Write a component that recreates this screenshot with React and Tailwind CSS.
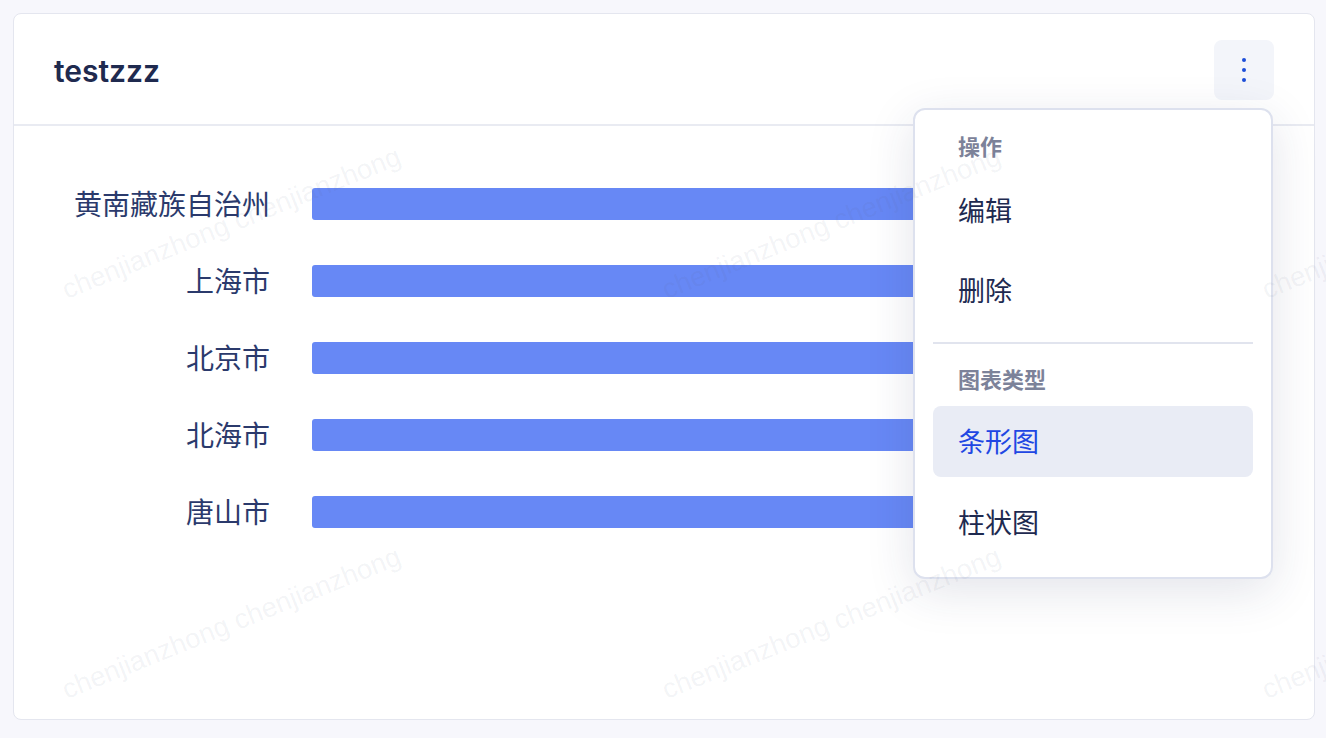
import { useState } from "react";

const regions = ["黄南藏族自治州", "上海市", "北京市", "北海市", "唐山市"];

const cjk = { fontFamily: '"Noto Sans CJK SC", "Noto Sans", sans-serif' };

function Watermark() {
    const tiles = Array.from({ length: 6 });
    return (
        <div className="pointer-events-none absolute inset-0 overflow-hidden">
            <div className="grid w-[1800px] grid-cols-3">
                {tiles.map((_, i) => (
                    <div key={i} className="relative h-[400px] w-[600px]">
                        <span
                            className="absolute left-[50px] top-[202px] -rotate-[22deg] whitespace-nowrap text-[27.5px] text-[rgba(90,100,130,0.08)]"
                            style={{ fontFamily: '"Liberation Sans", Arial, sans-serif' }}
                        >
                            chenjianzhong chenjianzhong
                        </span>
                    </div>
                ))}
            </div>
        </div>
    );
}

function MenuLabel({ children }) {
    return (
        <div className="flex h-[44px] items-center px-[25px] text-[22px] font-semibold text-[#7c8299]">
            {children}
        </div>
    );
}

function MenuItem({ children, active }) {
    return (
        <div
            className={
                active
                    ? "flex h-[71px] items-center rounded-lg bg-[#e9ecf5] px-[25px] text-[27px] text-[#2147e3]"
                    : "flex h-[71px] items-center rounded-lg px-[25px] text-[27px] text-[#1e2a50]"
            }
        >
            {children}
        </div>
    );
}

export default function App() {
    const [open] = useState(true);

    return (
        <div className="relative h-[738px] w-[1326px] bg-[#f7f7fc] p-[13px]" style={cjk}>
            <div className="relative flex h-[707px] w-[1302px] flex-col rounded-lg border border-[#e4e6ef] bg-white">
                <div className="flex h-[112px] items-center justify-between border-b-2 border-[#e9ebf2] px-10">
                    <h1
                        className="pt-[5px] text-[30px] font-semibold text-[#1f2a4f]"
                        style={{ fontFamily: 'Inter, "Noto Sans CJK SC", sans-serif' }}
                    >
                        testzzz
                    </h1>
                    <button className="mt-[2px] flex h-[60px] w-[60px] flex-col items-center justify-center gap-[6px] rounded-lg bg-[#f3f5fa]">
                        <span className="h-[4px] w-[4px] rounded-full bg-[#1d4ed8]" />
                        <span className="h-[4px] w-[4px] rounded-full bg-[#1d4ed8]" />
                        <span className="h-[4px] w-[4px] rounded-full bg-[#1d4ed8]" />
                    </button>
                </div>

                <div className="flex flex-col gap-[45px] pt-[62px] pr-[110px]">
                    {regions.map((name) => (
                        <div key={name} className="flex h-[32px] items-center gap-[42px]">
                            <div className="w-[256px] pb-[2px] text-right text-[28px] text-[#2b3a6c]">{name}</div>
                            <div className="h-[32px] flex-1 rounded-[3px] bg-[#6788f5]" />
                        </div>
                    ))}
                </div>

                {open && (
                    <div className="absolute right-[41px] top-[94px] w-[360px] rounded-xl border-2 border-[#dde1ee] bg-white px-[18px] pb-[19px] pt-[13px] shadow-[0_12px_48px_rgba(40,50,90,0.13)]">
                        <MenuLabel>操作</MenuLabel>
                        <div className="mt-[8px] flex flex-col gap-[9px]">
                            <MenuItem>编辑</MenuItem>
                            <MenuItem>删除</MenuItem>
                        </div>
                        <div className="mb-[12px] mt-[16px] h-[2px] bg-[#e1e4ee]" />
                        <MenuLabel>图表类型</MenuLabel>
                        <div className="mt-[6px] flex flex-col gap-[10px]">
                            <MenuItem active>条形图</MenuItem>
                            <MenuItem>柱状图</MenuItem>
                        </div>
                    </div>
                )}
            </div>
            <Watermark />
        </div>
    );
}
